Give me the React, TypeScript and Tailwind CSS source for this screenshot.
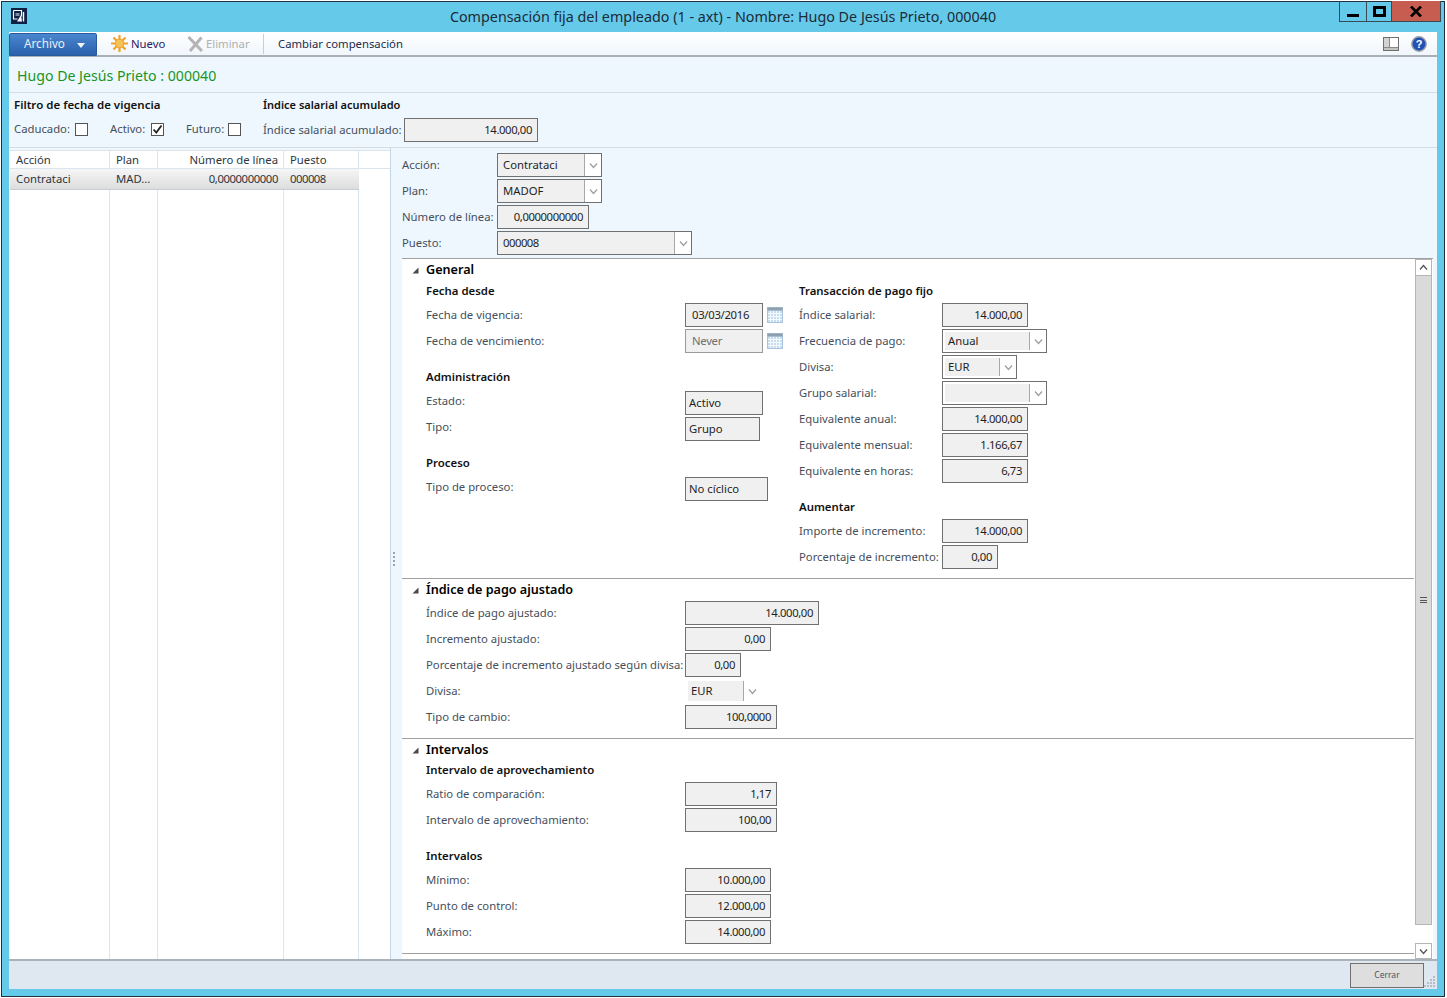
import React from "react";

const FONT = "font-['Noto_Sans',sans-serif]";

function Chevron({ up = false, color = "#a0a0a0", size = 9 }: { up?: boolean; color?: string; size?: number }) {
  return (
    <svg width={size} height={size} viewBox="0 0 9 9" fill="none">
      <path d={up ? "M1 6.5 L4.5 2.5 L8 6.5" : "M1 2.5 L4.5 6.5 L8 2.5"} stroke={color} strokeWidth="1.3" />
    </svg>
  );
}

function Tri() {
  return (
    <svg width="7" height="7" viewBox="0 0 7 7" className="shrink-0">
      <path d="M6.5 0.5 V6.5 H0.5 Z" fill="#4a4a4a" />
    </svg>
  );
}

function Calendar() {
  return (
    <svg width="16" height="16" viewBox="0 0 16 16" className="ml-[4px] shrink-0">
      <rect x="0.5" y="0.5" width="15" height="15" fill="#c6ddf0" stroke="#a9c4dc" />
      <rect x="0.5" y="0.5" width="15" height="3" fill="#8f9fae" />
      <path d="M3.5 4v11M6.5 4v11M9.5 4v11M12.5 4v11M1 6.5h14M1 9.5h14M1 12.5h14" stroke="#f4f9fd" strokeWidth="1" />
    </svg>
  );
}

function Input({ w, text, align = "right", disabled = false, date = false }: { w: string; text: string; align?: "left" | "right"; disabled?: boolean; date?: boolean }) {
  return (
    <div
      className={`${w} h-[24px] shrink-0 border bg-[#f0f0f0] flex items-center text-[#1f1f1f] ${
        disabled ? "border-[#9a9a9a] text-[#6f6f6f]" : "border-[#707070]"
      } ${align === "right" ? "justify-end pr-[5px] tracking-[-0.4px]" : date ? "justify-start pl-[6px] tracking-[-0.3px]" : "justify-start pl-[3px]"}`}
    >
      <span>{text}</span>
    </div>
  );
}

function Combo({ w, text, inset = false, borderless = false, digits = false }: { w: string; text: string; inset?: boolean; borderless?: boolean; digits?: boolean }) {
  return (
    <div className={`${w} h-[24px] shrink-0 flex items-stretch text-[#1f1f1f] ${borderless ? "" : "border border-[#707070]"} ${inset ? "bg-white py-[2px] pl-[2px]" : borderless ? "py-[2px] pl-[3px]" : "bg-white"}`}>
      <div className={`flex-1 bg-[#f0f0f0] flex items-center ${digits ? "tracking-[-0.5px]" : ""} ${inset ? "pl-[3px]" : borderless ? "pl-[3px]" : "pl-[5px]"}`}>{text}</div>
      <div className="w-[17px] shrink-0 border-l border-[#a8a8a8] flex items-center justify-center">
        <Chevron />
      </div>
    </div>
  );
}

function Row({ label, labelW, up = false, children }: { label: string; labelW: string; up?: boolean; children: React.ReactNode }) {
  return (
    <div className="h-[26px] flex items-center">
      <div className={`${labelW} shrink-0 text-[#454f5b] whitespace-nowrap ${up ? "pb-[4px]" : ""}`}>{label}</div>
      {children}
    </div>
  );
}

function SubHead({ children, h = "h-[22px]", mt = "", pb = "" }: { children: React.ReactNode; h?: string; mt?: string; pb?: string }) {
  return <div className={`${h} ${mt} ${pb} flex items-center font-semibold text-[#111] text-[11.4px] whitespace-nowrap`}>{children}</div>;
}

function SectionHead({ children }: { children: React.ReactNode }) {
  return (
    <div className="h-[21px] pt-[2px] flex items-center -ml-[14px] gap-[7px] font-semibold text-[12.6px] text-black">
      <Tri />
      <span>{children}</span>
    </div>
  );
}

const L1 = "w-[259px]";
const L2 = "w-[143px]";

function SunIcon() {
  return (
    <svg width="17" height="17" viewBox="0 0 17 17">
      <g stroke="#eda32c" strokeWidth="2.2" strokeLinecap="butt">
        <path d="M8.5 0v17M0 8.5h17M2.5 2.5l12 12M14.5 2.5l-12 12" />
      </g>
      <circle cx="8.5" cy="8.5" r="4.4" fill="#f6c255" stroke="#e8962a" strokeWidth="0.8" />
    </svg>
  );
}

function GhostX() {
  return (
    <svg width="16" height="16" viewBox="0 0 16 16">
      <path d="M1.5 1 L15 15 M14.5 1.5 L3 15" stroke="#b4b4b4" strokeWidth="3" />
    </svg>
  );
}

function AppLogo() {
  return (
    <svg width="16" height="16" viewBox="0 0 16 16" className="shrink-0">
      <rect width="16" height="16" fill="#0f2147" />
      <path d="M2.5 2.5h8v6" stroke="#fff" strokeWidth="1.2" fill="none" />
      <path d="M2.5 2.5v8.5h4" stroke="#fff" strokeWidth="1.2" fill="none" />
      <path d="M4.5 5h4v3h-4z" fill="#7f8aa3" />
      <path d="M6 13.5 L10 7 L11 13.5 Z" fill="#fff" />
      <path d="M12.5 4v9.5" stroke="#fff" strokeWidth="1.4" />
    </svg>
  );
}

function Check({ on = false }: { on?: boolean }) {
  return (
    <div className="w-[13px] h-[13px] border border-[#555] bg-white flex items-center justify-center shrink-0">
      {on && (
        <svg width="11" height="11" viewBox="0 0 11 11">
          <path d="M1.5 5.5 L4.3 8.5 L9.5 1.5" stroke="#222" strokeWidth="1.8" fill="none" />
        </svg>
      )}
    </div>
  );
}

function GridCell({ children, w, right = false, cls = "" }: { children?: React.ReactNode; w: string; right?: boolean; cls?: string }) {
  return (
    <div className={`${w} shrink-0 border-r border-[#d9e6f0] pl-[6px] pr-[5px] flex items-center whitespace-nowrap overflow-hidden ${right ? "justify-end" : ""} ${cls}`}>
      {children}
    </div>
  );
}

export default function App() {
  return (
    <div className={`${FONT} w-[1447px] h-[998px] bg-white pl-[1px] pt-[1px] text-[11.3px] leading-none overflow-hidden`}>
      <div className="w-[1444px] h-[996px] border border-[#20303c] bg-[#65c9ea] flex flex-col">
        {/* Title bar */}
        <div className="h-[30px] shrink-0 flex items-start text-[#1c2b36]">
          <div className="pl-[9px] pt-[6px] w-[320px]">
            <AppLogo />
          </div>
          <div className="flex-1 h-full flex items-center justify-center text-[14.34px] whitespace-nowrap">
            Compensación fija del empleado (1 - axt) - Nombre: Hugo De Jesús Prieto, 000040
          </div>
          <div className="w-[320px] flex justify-end pr-[3px]">
            <div className="flex h-[21px] -mt-[1px] border border-[#3a4a55] border-t-0">
              <div className="w-[27px] flex items-end justify-center pb-[4px] border-r border-[#3a4a55]">
                <div className="w-[12px] h-[3px] bg-black" />
              </div>
              <div className="w-[25px] flex items-center justify-center border-r border-[#3a4a55]">
                <div className="w-[13px] h-[11px] border-[3px] border-black border-t-[3px]" />
              </div>
              <div className="w-[48px] bg-[#c75c50] flex items-center justify-center">
                <svg width="12" height="11" viewBox="0 0 12 11">
                  <path d="M1 0.5 L11 10.5 M11 0.5 L1 10.5" stroke="#000" strokeWidth="2.6" />
                </svg>
              </div>
            </div>
          </div>
        </div>

        <div className="flex-1 min-h-0 mx-[7px] mb-[7px] flex flex-col bg-[#eef7fe]">
          {/* Toolbar */}
          <div className="h-[25px] shrink-0 flex items-center bg-gradient-to-b from-white to-[#f0f6fb] border-b-2 border-[#a9afb5] text-[#1c2b4a]">
            <div className="w-[88px] h-[23px] mt-[1px] rounded-t-[2px] bg-gradient-to-b from-[#4a86cf] to-[#2a61ac] border border-[#2a5a9e] text-[#e8f0fa] flex items-center pl-[14px] text-[11.7px] shrink-0">
              <span>Archivo</span>
              <svg width="8" height="5" viewBox="0 0 8 5" className="ml-[12px] mt-[2px]">
                <path d="M0 0H8L4 5Z" fill="#f2f6fb" />
              </svg>
            </div>
            <div className="flex items-center ml-[14px] gap-[3px] w-[76px]">
              <SunIcon />
              <span className="text-[#2b2060]">Nuevo</span>
            </div>
            <div className="flex items-center gap-[3px] w-[76px]">
              <GhostX />
              <span className="text-[#b0b0b0]">Eliminar</span>
            </div>
            <div className="w-[1px] h-[20px] bg-[#c9ced3]" />
            <span className="ml-[14px]">Cambiar compensación</span>
            <div className="flex-1" />
            <svg width="16" height="14" viewBox="0 0 16 14" className="mr-[12px]">
              <rect x="0.5" y="0.5" width="15" height="13" fill="#fff" stroke="#6f6f6f" />
              <rect x="1" y="1" width="5" height="9" fill="#d2d2d2" />
              <rect x="1" y="10" width="14" height="3" fill="#c4c4c4" />
              <path d="M1 10.5h14" stroke="#8a8a8a" strokeWidth="1" />
              <path d="M6.5 1v9" stroke="#8a8a8a" strokeWidth="1" />
            </svg>
            <svg width="16" height="16" viewBox="0 0 16 16" className="mr-[10px]">
              <circle cx="8" cy="8" r="7.2" fill="#2350b4" stroke="#9aa0aa" strokeWidth="1.4" />
              <text x="8" y="12" textAnchor="middle" fontSize="11" fontWeight="700" fill="#fff" fontFamily="Liberation Sans, sans-serif">?</text>
            </svg>
          </div>

          {/* Name header */}
          <div className="h-[36px] shrink-0 border-b border-[#d5dde4] flex items-center pl-[8px] pt-[3px] text-[14.15px] text-[#18951f]">
            Hugo De Jesús Prieto : 000040
          </div>

          {/* Filter */}
          <div className="h-[55px] shrink-0 border-b border-[#d5dde4] flex pl-[5px] text-[#454f5b]">
            <div className="w-[249px]">
              <div className="h-[24px] flex items-center font-semibold text-[#111] text-[11.5px]">Filtro de fecha de vigencia</div>
              <div className="h-[24px] flex items-center">
                <span className="w-[61px]">Caducado:</span>
                <Check />
                <span className="ml-[22px] w-[41px]">Activo:</span>
                <Check on />
                <span className="ml-[22px] w-[42px]">Futuro:</span>
                <Check />
              </div>
            </div>
            <div>
              <div className="h-[24px] pb-[2px] flex items-center font-semibold text-[#111] text-[11px]">Índice salarial acumulado</div>
              <div className="h-[26px] flex items-center">
                <span className="w-[141px] whitespace-nowrap pb-[1px]">Índice salarial acumulado:</span>
                <Input w="w-[134px]" text="14.000,00" />
              </div>
            </div>
          </div>

          {/* Main */}
          <div className="flex-1 min-h-0 flex">
            {/* Grid */}
            <div className="w-[381px] shrink-0 ml-[1px] border-r border-[#c5d5e6] pt-[2px] flex flex-col bg-gradient-to-b from-[#eef7fe] from-[2px] to-white to-[2px] text-[#2d3640]">
              <div className="h-[19px] flex border-b border-[#d9e6f0] border-t">
                <GridCell w="w-[100px]">Acción</GridCell>
                <GridCell w="w-[48px]">Plan</GridCell>
                <GridCell w="w-[126px]" right>Número de línea</GridCell>
                <GridCell w="w-[75px]">Puesto</GridCell>
              </div>
              <div className="h-[21px] flex bg-gradient-to-b from-[#f6f6f6] to-[#dddddd] border-b border-[#c5ced6] w-[349px]">
                <GridCell w="w-[100px]" cls="border-transparent">Contrataci</GridCell>
                <GridCell w="w-[48px]" cls="border-transparent">MAD...</GridCell>
                <GridCell w="w-[126px]" right cls="border-transparent tracking-[-0.4px]">0,0000000000</GridCell>
                <GridCell w="w-[75px]" cls="border-transparent tracking-[-0.5px]">000008</GridCell>
              </div>
              <div className="flex-1 flex">
                <GridCell w="w-[100px]" />
                <GridCell w="w-[48px]" />
                <GridCell w="w-[126px]" />
                <GridCell w="w-[75px]" />
              </div>
            </div>

            {/* Splitter */}
            <div className="w-[11px] shrink-0 flex flex-col items-center justify-center gap-[2px] pr-[6px] pt-[10px]">
              <div className="w-[2px] h-[2px] bg-[#9aa5ad]" />
              <div className="w-[2px] h-[2px] bg-[#9aa5ad]" />
              <div className="w-[2px] h-[2px] bg-[#9aa5ad]" />
              <div className="w-[2px] h-[2px] bg-[#9aa5ad]" />
            </div>

            {/* Right */}
            <div className="flex-1 min-w-0 flex flex-col pr-[4px]">
              <div className="h-[110px] shrink-0 pt-[4px]">
                <Row label="Acción:" labelW="w-[95px]"><Combo w="w-[105px]" text="Contrataci" /></Row>
                <Row label="Plan:" labelW="w-[95px]"><Combo w="w-[105px]" text="MADOF" /></Row>
                <Row label="Número de línea:" labelW="w-[95px]"><Input w="w-[92px]" text="0,0000000000" /></Row>
                <Row label="Puesto:" labelW="w-[95px]"><Combo w="w-[195px]" text="000008" digits /></Row>
              </div>

              <div className="flex-1 min-h-0 bg-white border-t border-[#a0a0a0] flex">
                <div className="w-[1012px] shrink-0 flex flex-col">
                  {/* General */}
                  <section className="pl-[24px] h-[320px] border-b border-[#a0a0a0]">
                    <SectionHead>General</SectionHead>
                    <div className="flex">
                      <div className="w-[373px]">
                        <SubHead>Fecha desde</SubHead>
                        <Row label="Fecha de vigencia:" labelW={L1}><Input w="w-[78px]" text="03/03/2016" align="left" date /><Calendar /></Row>
                        <Row label="Fecha de vencimiento:" labelW={L1}><Input w="w-[78px]" text="Never" align="left" disabled date /><Calendar /></Row>
                        <SubHead mt="mt-[12px]">Administración</SubHead>
                        <div className="mt-[2px]">
                          <Row label="Estado:" labelW={L1} up><Input w="w-[78px]" text="Activo" align="left" /></Row>
                          <Row label="Tipo:" labelW={L1} up><Input w="w-[75px]" text="Grupo" align="left" /></Row>
                        </div>
                        <SubHead mt="mt-[10px]">Proceso</SubHead>
                        <div className="mt-[2px]">
                          <Row label="Tipo de proceso:" labelW={L1} up><Input w="w-[83px]" text="No cíclico" align="left" /></Row>
                        </div>
                      </div>
                      <div>
                        <SubHead>Transacción de pago fijo</SubHead>
                        <Row label="Índice salarial:" labelW={L2}><Input w="w-[86px]" text="14.000,00" /></Row>
                        <Row label="Frecuencia de pago:" labelW={L2}><Combo w="w-[105px]" text="Anual" inset /></Row>
                        <Row label="Divisa:" labelW={L2}><Combo w="w-[75px]" text="EUR" inset /></Row>
                        <Row label="Grupo salarial:" labelW={L2}><Combo w="w-[105px]" text="" inset /></Row>
                        <Row label="Equivalente anual:" labelW={L2}><Input w="w-[86px]" text="14.000,00" /></Row>
                        <Row label="Equivalente mensual:" labelW={L2}><Input w="w-[86px]" text="1.166,67" /></Row>
                        <Row label="Equivalente en horas:" labelW={L2}><Input w="w-[86px]" text="6,73" /></Row>
                        <SubHead mt="mt-[12px]">Aumentar</SubHead>
                        <Row label="Importe de incremento:" labelW={L2}><Input w="w-[86px]" text="14.000,00" /></Row>
                        <Row label="Porcentaje de incremento:" labelW={L2}><Input w="w-[56px]" text="0,00" /></Row>
                      </div>
                    </div>
                  </section>

                  {/* Indice */}
                  <section className="pl-[24px] h-[160px] border-b border-[#a0a0a0]">
                    <SectionHead>Índice de pago ajustado</SectionHead>
                    <Row label="Índice de pago ajustado:" labelW={L1}><Input w="w-[134px]" text="14.000,00" /></Row>
                    <Row label="Incremento ajustado:" labelW={L1}><Input w="w-[86px]" text="0,00" /></Row>
                    <Row label="Porcentaje de incremento ajustado según divisa:" labelW={L1}><Input w="w-[56px]" text="0,00" /></Row>
                    <Row label="Divisa:" labelW={L1}><Combo w="w-[75px]" text="EUR" borderless /></Row>
                    <Row label="Tipo de cambio:" labelW={L1}><Input w="w-[92px]" text="100,0000" /></Row>
                  </section>

                  {/* Intervalos */}
                  <section className="pl-[24px] h-[215px] border-b border-[#a0a0a0]">
                    <SectionHead>Intervalos</SectionHead>
                    <SubHead h="h-[21px]" pb="pb-[2px]">Intervalo de aprovechamiento</SubHead>
                    <Row label="Ratio de comparación:" labelW={L1}><Input w="w-[92px]" text="1,17" /></Row>
                    <Row label="Intervalo de aprovechamiento:" labelW={L1}><Input w="w-[92px]" text="100,00" /></Row>
                    <SubHead mt="mt-[12px]">Intervalos</SubHead>
                    <Row label="Mínimo:" labelW={L1}><Input w="w-[86px]" text="10.000,00" /></Row>
                    <Row label="Punto de control:" labelW={L1}><Input w="w-[86px]" text="12.000,00" /></Row>
                    <Row label="Máximo:" labelW={L1}><Input w="w-[86px]" text="14.000,00" /></Row>
                  </section>
                </div>

                {/* Scrollbar */}
                <div className="w-[17px] ml-[1px] shrink-0 flex flex-col">
                  <div className="h-[17px] border border-[#b5b5b5] flex items-center justify-center"><Chevron up color="#555" /></div>
                  <div className="h-[649px] bg-[#dadada] border-x border-b border-[#b5b5b5] flex items-center justify-center">
                    <div className="w-[7px] h-[6px] border-y border-[#555] flex items-center"><div className="w-full h-[1px] bg-[#555]" /></div>
                  </div>
                  <div className="flex-1" />
                  <div className="h-[16px] border border-[#b5b5b5] flex items-center justify-center"><Chevron color="#555" /></div>
                </div>
              </div>
            </div>
          </div>

          {/* Footer */}
          <div className="h-[30px] shrink-0 bg-[#dfe8f1] border-t-2 border-[#aab2ba] flex items-center justify-end">
            <div className="w-[74px] h-[25px] border border-[#707070] bg-[#dedede] flex items-center justify-center text-[8.5px] text-[#4a5560] pt-[1px]">Cerrar</div>
            <svg width="13" height="12" viewBox="0 0 13 12" className="self-end mb-[1px]">
              <g fill="#b8bec4">
                <rect x="9" y="0" width="2" height="2" />
                <rect x="6" y="3" width="2" height="2" />
                <rect x="9" y="3" width="2" height="2" />
                <rect x="3" y="6" width="2" height="2" />
                <rect x="6" y="6" width="2" height="2" />
                <rect x="9" y="6" width="2" height="2" />
                <rect x="0" y="9" width="2" height="2" />
                <rect x="3" y="9" width="2" height="2" />
                <rect x="6" y="9" width="2" height="2" />
                <rect x="9" y="9" width="2" height="2" />
              </g>
            </svg>
          </div>
        </div>
      </div>
    </div>
  );
}
